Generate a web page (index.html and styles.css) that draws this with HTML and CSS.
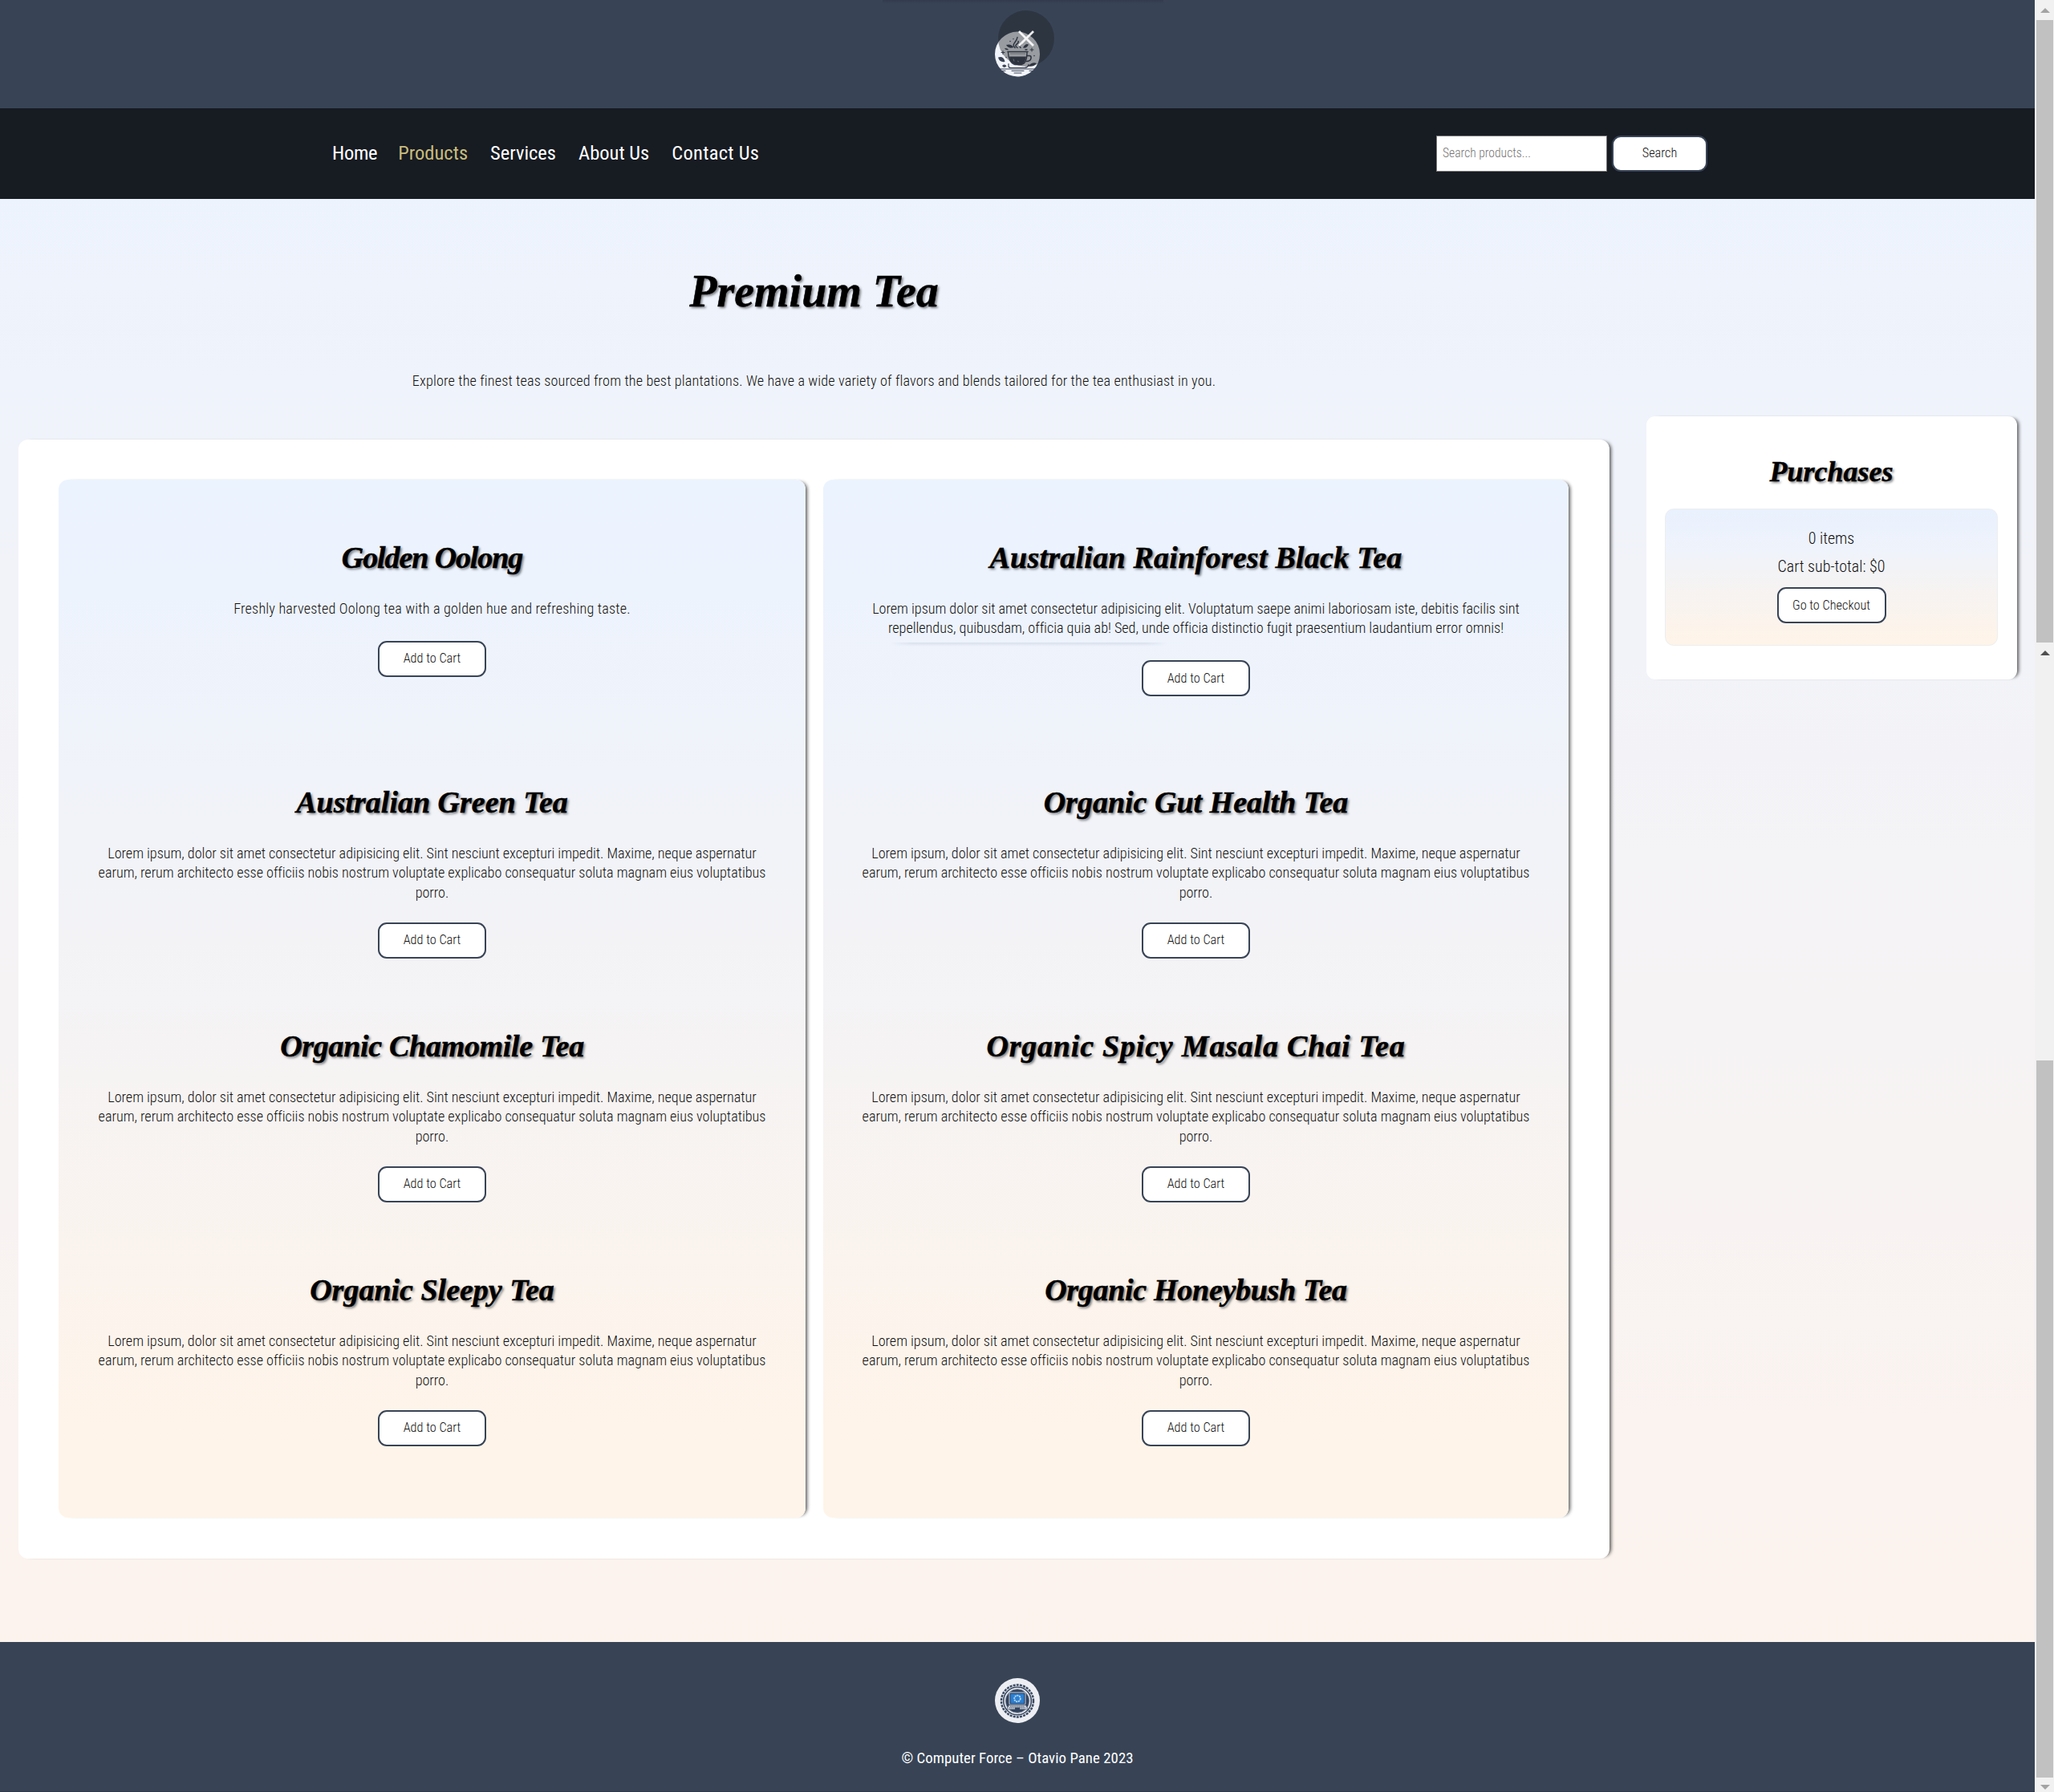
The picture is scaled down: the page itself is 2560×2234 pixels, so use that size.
FILE: index.html
```html
<!DOCTYPE html>
<html lang="en">
<head>
<meta charset="utf-8">
<title>Premium Tea</title>
<link rel="stylesheet" href="styles.css">
</head>
<body>
<div class="page">
  <header class="header">
    <svg class="logo" viewBox="0 0 56 56" aria-hidden="true">
      <circle cx="28" cy="28" r="28" fill="#f1f4fa"/>
      <g fill="none" stroke="#3a4354" stroke-width="1.6" stroke-linecap="round">
        <path d="M16 25h25"/>
        <path d="M40 30h3q2.500 0 2 3q-.5 4-6 4"/>
        <path d="M28 20c-6-4 3-5 1-8M25 20c-5-5 2-6 3-13M32 20c-3-3 2-3 1-6" stroke-width="1.5"/>
        <path d="M17 40v3q0 2 3 2h17q4 0 5-4M7 46.500h44" stroke-width="1.2"/>
        <path d="M21 48.800h15M24 51.500h9M9 48.800h4M43 48.800h5" stroke-width="1"/>
        <path d="M10 24v4M8 26h4M46 20.500v4M44 22.500h4" stroke-width="1"/>
        <path d="M16.500 26c0 8 4 14 8.500 15h8c5-1 7-7 7-15" stroke-width="1.4"/>
      </g>
      <g fill="#3a4354">
        <path d="M18 31h21c-.5 5-3 9-6 10h-9c-3-1-5.500-5-6-10z"/>
        <path d="M4 32q7-2 8.500 5.500q-7 1-8.500-5.500zM9 42.500q3.500-3 5.500.5q-3 3-5.500-.5zM14 16.500q6-2 9.500 3q-6 2.500-9.500-3zM35 20q3-6 7-4q-2 5-7 4zM12 20.500q4 0 5 2q-4 1-5-2zM37 22q3-1 4 .5q-3 1.800-4-.5zM41 43q6-6 11-3.500q-4 5-11 3.500z"/>
        <circle cx="19" cy="12" r=".8"/><circle cx="39" cy="10" r=".8"/><circle cx="23" cy="9" r=".7"/><circle cx="49" cy="30" r=".8"/><circle cx="14" cy="32" r=".7"/>
      </g>
      <path d="M19 27.500h19" stroke="#b9bec9" stroke-width="1.600"/>
      <path d="M23 34l1 3M28 36.500l2 1" stroke="#9aa0aa" stroke-width="1"/>
    </svg>
    <svg class="close" viewBox="0 0 70 70" aria-hidden="true">
      <circle cx="35" cy="35" r="35" fill="#202124" fill-opacity=".42"/>
      <path d="M26 26L44 44M44 26L26 44" stroke="#fff" stroke-opacity=".9" stroke-width="2.800"/>
    </svg>
    <div class="top-shade"></div>
  </header>
  <nav class="nav">
    <a class="link">Home</a><a class="link active">Products</a><a class="link">Services</a><a class="link">About Us</a><a class="link">Contact Us</a>
    <form class="search">
      <input class="field" type="text" placeholder="Search products...">
      <button class="btn btn-search" type="button">Search</button>
    </form>
  </nav>
  <main class="main">
    <section class="shop">
      <h1 class="title">Premium Tea</h1>
      <p class="intro">Explore the finest teas sourced from the best plantations. We have a wide variety of flavors and blends tailored for the tea enthusiast in you.</p>
      <div class="panel">
        <div class="column">
          <article class="tea">
            <h2 class="name golden">Golden Oolong</h2>
            <p class="text short">Freshly harvested Oolong tea with a golden hue and refreshing taste.</p>
            <button class="btn" type="button">Add to Cart</button>
          </article>
          <article class="tea">
            <h2 class="name">Australian Green Tea</h2>
            <p class="text">Lorem ipsum, dolor sit amet consectetur adipisicing elit. Sint nesciunt excepturi impedit. Maxime, neque aspernatur<br>earum, rerum architecto esse officiis nobis nostrum voluptate explicabo consequatur soluta magnam eius voluptatibus<br>porro.</p>
            <button class="btn" type="button">Add to Cart</button>
          </article>
          <article class="tea">
            <h2 class="name snug">Organic Chamomile Tea</h2>
            <p class="text">Lorem ipsum, dolor sit amet consectetur adipisicing elit. Sint nesciunt excepturi impedit. Maxime, neque aspernatur<br>earum, rerum architecto esse officiis nobis nostrum voluptate explicabo consequatur soluta magnam eius voluptatibus<br>porro.</p>
            <button class="btn" type="button">Add to Cart</button>
          </article>
          <article class="tea">
            <h2 class="name">Organic Sleepy Tea</h2>
            <p class="text">Lorem ipsum, dolor sit amet consectetur adipisicing elit. Sint nesciunt excepturi impedit. Maxime, neque aspernatur<br>earum, rerum architecto esse officiis nobis nostrum voluptate explicabo consequatur soluta magnam eius voluptatibus<br>porro.</p>
            <button class="btn" type="button">Add to Cart</button>
          </article>
        </div>
        <div class="column">
          <article class="tea">
            <h2 class="name roomy">Australian Rainforest Black Tea</h2>
            <p class="text">Lorem ipsum dolor sit amet consectetur adipisicing elit. Voluptatum saepe animi laboriosam iste, debitis facilis sint<br>repellendus, quibusdam, officia quia ab! Sed, unde officia distinctio fugit praesentium laudantium error omnis!</p>
            <button class="btn" type="button">Add to Cart</button>
            <div class="seam"></div>
          </article>
          <article class="tea">
            <h2 class="name">Organic Gut Health Tea</h2>
            <p class="text">Lorem ipsum, dolor sit amet consectetur adipisicing elit. Sint nesciunt excepturi impedit. Maxime, neque aspernatur<br>earum, rerum architecto esse officiis nobis nostrum voluptate explicabo consequatur soluta magnam eius voluptatibus<br>porro.</p>
            <button class="btn" type="button">Add to Cart</button>
          </article>
          <article class="tea">
            <h2 class="name wide">Organic Spicy Masala Chai Tea</h2>
            <p class="text">Lorem ipsum, dolor sit amet consectetur adipisicing elit. Sint nesciunt excepturi impedit. Maxime, neque aspernatur<br>earum, rerum architecto esse officiis nobis nostrum voluptate explicabo consequatur soluta magnam eius voluptatibus<br>porro.</p>
            <button class="btn" type="button">Add to Cart</button>
          </article>
          <article class="tea">
            <h2 class="name snug">Organic Honeybush Tea</h2>
            <p class="text">Lorem ipsum, dolor sit amet consectetur adipisicing elit. Sint nesciunt excepturi impedit. Maxime, neque aspernatur<br>earum, rerum architecto esse officiis nobis nostrum voluptate explicabo consequatur soluta magnam eius voluptatibus<br>porro.</p>
            <button class="btn" type="button">Add to Cart</button>
          </article>
        </div>
      </div>
    </section>
    <aside class="cart">
      <h2 class="name purchases">Purchases</h2>
      <div class="summary">
        <p class="line">0 items</p>
        <p class="line">Cart sub-total: $0</p>
        <button class="btn btn-checkout" type="button">Go to Checkout</button>
      </div>
    </aside>
  </main>
  <footer class="footer">
    <svg class="badge" viewBox="0 0 56 56" aria-hidden="true">
      <circle cx="28" cy="28" r="28" fill="#eceef3"/>
      <circle cx="28" cy="28.500" r="20" fill="none" stroke="#3c4b63" stroke-width="2.500" stroke-dasharray="3 1.200"/>
      <circle cx="28" cy="28.500" r="17.300" fill="none" stroke="#3c4b63" stroke-width="1.600"/>
      <circle cx="28" cy="28.500" r="14.800" fill="#33435d" stroke="#8a95a8" stroke-width=".8"/>
      <rect x="18" y="18" width="20" height="15" rx="1" fill="#1d3557" stroke="#d4d9e2" stroke-width="1"/>
      <rect x="19.500" y="19.500" width="17" height="12" fill="#2c7fd0"/>
      <circle cx="28" cy="25.500" r="3.800" fill="none" stroke="#b9dcf8" stroke-width="1.800" stroke-dasharray="2 .8"/>
      <path d="M17.500 33.500h21l3 5.500h-27z" fill="#c8ced8" stroke="#33435d" stroke-width=".6"/>
      <path d="M19 35.200h18M18 37h7M31 37h7" stroke="#4b5a72" stroke-width="1" stroke-dasharray="1.200 .6"/>
      <path d="M25 36.500h6v2.500h-6z" fill="#33435d"/>
    </svg>
    <p class="copy">© Computer Force – Otavio Pane 2023</p>
  </footer>
</div>
<div class="bars" aria-hidden="true">
  <div class="bar bar-one"><i class="up pale"></i><b class="thumb"></b></div>
  <div class="bar bar-two"><i class="up dark"></i><b class="thumb"></b><i class="down"></i></div>
</div>
</body>
</html>
```
FILE: styles.css
```css
* { box-sizing: border-box; }

body {
  margin: 0;
  display: grid;
  grid-template-columns: 1fr 24px;
  width: 2560px;
  height: 2234px;
  overflow: hidden;
  font: 300 18.2px/24.3px Roboto, sans-serif;
  font-stretch: 75%;
  color: #111;
}

h1, h2, p { margin: 0; font-weight: 300; }

.page { display: flex; flex-direction: column; background: linear-gradient(#ebf3ff, #fef3ec); }

.header {
  position: relative;
  height: 135px;
  padding-top: 39px;
  background: #384456;
  text-align: center;
}
.logo { display: block; width: 56px; height: 57px; margin: 0 auto; }
.close { position: absolute; left: 1244px; top: 13px; width: 70px; height: 70px; }
.top-shade {
  position: absolute;
  left: 1100px;
  top: 0;
  width: 350px;
  height: 5px;
  background: linear-gradient(rgba(40, 40, 60, .3), transparent);
}

.nav {
  display: flex;
  align-items: center;
  height: 113px;
  padding: 0 408px 0 414px;
  background: #171b22;
}
.link {
  margin-right: 28px;
  padding-bottom: 2px;
  color: #fff;
  font-size: 24.5px;
  font-weight: 400;
  line-height: 32px;
}
.link:first-child { margin-right: 26px; letter-spacing: -.3px; }
.link:nth-child(5) { letter-spacing: .3px; }
.active { color: #c9bd7c; }
.search { display: flex; align-items: center; gap: 6px; margin-left: auto; }
.field {
  width: 213px;
  height: 45px;
  padding: 0 8px 2px 7px;
  border: 1px solid #767676;
  background: #fff;
  font: 300 15.6px Roboto, sans-serif;
  font-stretch: 75%;
}
.field::placeholder { color: #757575; }

.btn {
  display: block;
  width: 135px;
  height: 45px;
  margin: 25px auto 0;
  padding: 0 0 1px;
  border: 2px solid #384456;
  border-radius: 11px;
  background: #fff;
  color: #111;
  font: 300 16.3px Roboto, sans-serif;
  font-stretch: 75%;
}
.btn-search { width: 119px; margin: 0; padding-bottom: 2px; }
.btn-checkout { margin-top: 14px; width: 136px; }

.main {
  display: flex;
  align-items: flex-start;
  gap: 46px;
  height: 1799px;
  padding-left: 23px;
}
.shop { width: 1983px; text-align: center; }
.title, .name {
  font-family: "Liberation Serif", serif;
  font-style: italic;
  font-weight: 700;
  color: #000;
  white-space: nowrap;
  text-shadow: 2px 2px 3px rgba(0, 0, 0, .5);
  -webkit-text-stroke: .5px #000;
}
.title { margin-top: 81px; font-size: 56px; line-height: 68px; }
.intro { margin-top: 66px; line-height: 24px; letter-spacing: .14px; }
.panel {
  display: grid;
  grid-template-columns: 931px 929px;
  gap: 22px;
  height: 1395px;
  margin-top: 61px;
  padding: 50px 51px 51px 50px;
  border-radius: 12px;
  background: #fff;
  box-shadow: 5px 0 4px -3px rgba(0, 0, 0, .65);
}
.column {
  display: grid;
  grid-template-rows: 305px 304px 304px 304px;
  height: 1294px;
  padding-top: 74px;
  border-radius: 12px;
  background: linear-gradient(#ebf3ff, #f4f3f5 50%, #fff4e9 93%);
  box-shadow: 5px 0 4px -3px rgba(0, 0, 0, .65);
}
.tea { position: relative; min-width: 0; }
.tea:first-child .btn { margin-top: 27.5px; }
.name { font-size: 38px; line-height: 46px; }
.golden { letter-spacing: -1.1px; }
.snug { letter-spacing: -.3px; }
.roomy { letter-spacing: .25px; }
.wide { letter-spacing: .8px; }
.text { margin-top: 29px; white-space: nowrap; letter-spacing: -.03px; }
.short { letter-spacing: .18px; }
.seam {
  position: absolute;
  left: 84px;
  top: 129px;
  width: 345px;
  height: 5px;
  background: linear-gradient(rgba(80, 90, 120, .12), transparent);
  mask-image: linear-gradient(90deg, transparent, #000 8%, #000 92%, transparent);
}

.cart {
  width: 462px;
  height: 328px;
  margin-top: 271px;
  padding: 46px 24px 0 23px;
  border-radius: 11px;
  background: #fff;
  box-shadow: 5px 0 4px -3px rgba(0, 0, 0, .65);
  text-align: center;
}
.purchases { font-size: 36px; }
.summary {
  height: 171px;
  margin-top: 23px;
  padding-top: 24px;
  border: 1px solid #eceef0;
  border-radius: 11px;
  background: linear-gradient(#e9f1fe, #eff3fb 30%, #f5f3f3 55%, #fff4e8);
}
.line { font-size: 20px; line-height: 24px; }
.line + .line { margin-top: 11px; }

.footer {
  flex: 1;
  padding-top: 45px;
  border-bottom: 1px solid #2f3847;
  background: #384456;
  color: #fff;
  text-align: center;
}
.badge { display: block; width: 56px; height: 56px; margin: 0 auto 32px; }
.copy { font-size: 18.8px; font-weight: 400; line-height: 25px; letter-spacing: .06px; }

.bars { display: flex; flex-direction: column; background: #f1f1f1; }
.bar { display: flex; flex-direction: column; align-items: center; padding-left: 1px; }
.bar-one { height: 801px; }
.bar-two { flex: 1; }
.up, .down { width: 0; border: 6px solid transparent; border-top-width: 0; border-bottom: 6px solid #a3a3a3; }
.pale { margin: 10px 0 9px; }
.dark { margin: 10px 0 505px; border-bottom-color: #505050; }
.thumb { flex: 1; width: 21px; background: #c1c1c1; }
.down { margin: 9px 0 3px; border: 6px solid transparent; border-bottom-width: 0; border-top: 6px solid #a3a3a3; }
```
